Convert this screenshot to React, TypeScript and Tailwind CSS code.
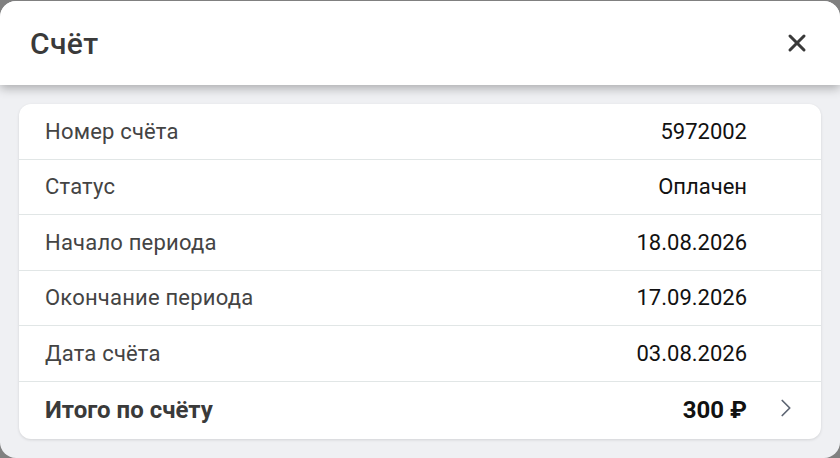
import React from 'react';
import { X, ChevronRight } from 'lucide-react';

const rows = [
  { label: 'Номер счёта', value: '5972002' },
  { label: 'Статус', value: 'Оплачен' },
  { label: 'Начало периода', value: '18.08.2026' },
  { label: 'Окончание периода', value: '17.09.2026' },
  { label: 'Дата счёта', value: '03.08.2026' },
];

export default function App() {
  return (
    <div className="h-[458px] w-[840px] bg-[#808080] pt-px" style={{ fontFamily: 'Roboto, "Noto Sans", sans-serif' }}>
      <div className="flex h-[457px] flex-col overflow-hidden rounded-[16px] bg-[#eff0f3]">
        {/* Header */}
        <div className="relative z-10 flex h-[84px] shrink-0 items-center justify-between bg-white pl-[30px] pr-[29px] shadow-[0_3px_10px_rgba(0,0,0,0.3)]">
          <h1 className="text-[30px] font-medium tracking-[0.4px] text-[#3a3a3a]">Счёт</h1>
          <X size={28} strokeWidth={2.6} className="text-[#3a3a3a]" />
        </div>

        {/* Body */}
        <div className="px-[19px] pt-[19px]">
          <div className="overflow-hidden rounded-[12px] bg-white shadow-[0_1px_3px_rgba(0,0,0,0.12)]">
            {rows.map((r) => (
              <div key={r.label} className="flex h-[55.5px] items-center border-b border-[#e1e6e6] pl-[26px] pr-[30px]">
                <span className="flex-1 text-[22px] tracking-[0.2px] text-[#444]">{r.label}</span>
                <span className="text-[22px] text-[#111]">{r.value}</span>
                <span className="w-[44px]" />
              </div>
            ))}
            <div className="flex h-[57px] items-center pl-[26px] pr-[20px]">
              <span className="flex-1 text-[24px] font-bold text-[#3a3a3a]">Итого по счёту</span>
              <span className="text-[24px] font-bold text-[#111]">300 ₽</span>
              <span className="flex w-[54px] justify-end">
                <ChevronRight size={30} strokeWidth={1.4} className="-mt-[5px] text-[#5d6573]" />
              </span>
            </div>
          </div>
        </div>
      </div>
    </div>
  );
}
